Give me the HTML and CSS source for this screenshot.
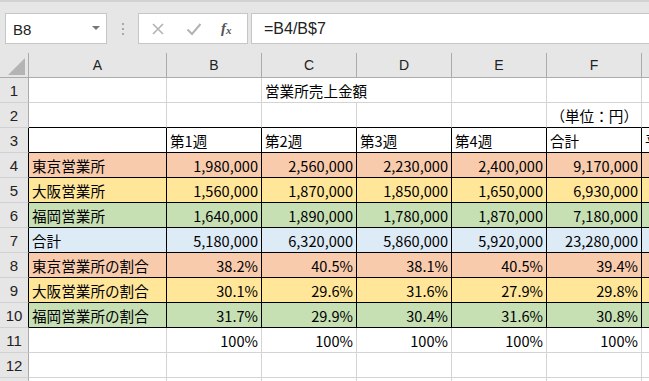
FILE: index.html
```html
<!DOCTYPE html>
<html lang="ja">
<head>
<meta charset="utf-8">
<link rel="stylesheet" href="styles.css">
</head>
<body>
<div class="toolbar">
  <div class="namebox"><span>B8</span><span class="caret"></span></div>
  <div class="dots"><i></i><i></i><i></i></div>
  <div class="fbtns">
    <svg class="ico" width="14" height="14" viewBox="0 0 14 14"><path d="M2 2 L12 12 M12 2 L2 12" stroke="#b3b3b3" stroke-width="1.6" fill="none"/></svg>
    <svg class="ico" width="16" height="14" viewBox="0 0 16 14"><path d="M1.5 7.5 L6 12 L14.5 2" stroke="#b3b3b3" stroke-width="2" fill="none"/></svg>
    <span class="fx">f<sub>x</sub></span>
  </div>
  <div class="formula">=B4/B$7</div>
</div>
<div class="sheet">
  <div class="corner"><span class="tri"></span></div>
  <div class="h">A</div><div class="h">B</div><div class="h">C</div><div class="h">D</div><div class="h">E</div><div class="h">F</div><div class="h"></div>

  <div class="r">1</div><div class="c"></div><div class="c"></div><div class="c span2">営業所売上金額</div><div class="c"></div><div class="c"></div><div class="c"></div>

  <div class="r">2</div><div class="c bt"></div><div class="c bt"></div><div class="c bt"></div><div class="c bt"></div><div class="c bt"></div><div class="c bt n">（単位：円）</div><div class="c bt"></div>

  <div class="r rb">3</div><div class="c b"></div><div class="c b">第1週</div><div class="c b">第2週</div><div class="c b">第3週</div><div class="c b">第4週</div><div class="c b">合計</div><div class="c b">平均</div>

  <div class="r rb">4</div><div class="c b or">東京営業所</div><div class="c b or n">1,980,000</div><div class="c b or n">2,560,000</div><div class="c b or n">2,230,000</div><div class="c b or n">2,400,000</div><div class="c b or n">9,170,000</div><div class="c b or n"></div>

  <div class="r rb">5</div><div class="c b ye">大阪営業所</div><div class="c b ye n">1,560,000</div><div class="c b ye n">1,870,000</div><div class="c b ye n">1,850,000</div><div class="c b ye n">1,650,000</div><div class="c b ye n">6,930,000</div><div class="c b ye n"></div>

  <div class="r rb">6</div><div class="c b gr">福岡営業所</div><div class="c b gr n">1,640,000</div><div class="c b gr n">1,890,000</div><div class="c b gr n">1,780,000</div><div class="c b gr n">1,870,000</div><div class="c b gr n">7,180,000</div><div class="c b gr n"></div>

  <div class="r rb">7</div><div class="c b bl">合計</div><div class="c b bl n">5,180,000</div><div class="c b bl n">6,320,000</div><div class="c b bl n">5,860,000</div><div class="c b bl n">5,920,000</div><div class="c b bl n">23,280,000</div><div class="c b bl n"></div>

  <div class="r rb">8</div><div class="c b or">東京営業所の割合</div><div class="c b or n">38.2%</div><div class="c b or n">40.5%</div><div class="c b or n">38.1%</div><div class="c b or n">40.5%</div><div class="c b or n">39.4%</div><div class="c b or n"></div>

  <div class="r rb">9</div><div class="c b ye">大阪営業所の割合</div><div class="c b ye n">30.1%</div><div class="c b ye n">29.6%</div><div class="c b ye n">31.6%</div><div class="c b ye n">27.9%</div><div class="c b ye n">29.8%</div><div class="c b ye n"></div>

  <div class="r rb">10</div><div class="c b gr">福岡営業所の割合</div><div class="c b gr n">31.7%</div><div class="c b gr n">29.9%</div><div class="c b gr n">30.4%</div><div class="c b gr n">31.6%</div><div class="c b gr n">30.8%</div><div class="c b gr n"></div>

  <div class="r">11</div><div class="c"></div><div class="c n">100%</div><div class="c n">100%</div><div class="c n">100%</div><div class="c n">100%</div><div class="c n">100%</div><div class="c"></div>

  <div class="r">12</div><div class="c"></div><div class="c"></div><div class="c"></div><div class="c"></div><div class="c"></div><div class="c"></div><div class="c"></div>

  <div class="r"></div><div class="c"></div><div class="c"></div><div class="c"></div><div class="c"></div><div class="c"></div><div class="c"></div><div class="c"></div>
</div>
</body>
</html>
```

FILE: styles.css
```css
html, body {
  margin: 0;
  padding: 0;
  overflow: hidden;
  background: #ffffff;
  width: 649px;
  height: 381px;
}
body {
  font-family: "Liberation Sans", Arial, sans-serif;
  color: #000;
}
.toolbar {
  height: 53px;
  box-sizing: border-box;
  background: #e6e6e6;
  border-top: 2px solid #d2d2d2;
  display: flex;
  align-items: flex-start;
  padding-top: 11px;
  padding-left: 5px;
}
.namebox {
  width: 102px;
  height: 31px;
  box-sizing: border-box;
  background: #fff;
  border: 1px solid #c6c6c6;
  display: flex;
  align-items: center;
  justify-content: space-between;
  padding: 1px 6px 0 7px;
  font-size: 15px;
  color: #222;
}
.caret {
  width: 0;
  height: 0;
  border-left: 4px solid transparent;
  border-right: 4px solid transparent;
  border-top: 4px solid #777;
  margin-top: -2px;
}
.dots {
  width: 31px;
  height: 31px;
  display: flex;
  flex-direction: column;
  align-items: center;
  justify-content: center;
  gap: 3px;
}
.dots i {
  width: 2px;
  height: 2px;
  background: #a8a8a8;
  display: block;
}
.fbtns {
  width: 110px;
  height: 31px;
  box-sizing: border-box;
  background: #fff;
  border: 1px solid #c6c6c6;
  display: flex;
  align-items: center;
  padding-left: 12px;
}
.fbtns .ico:nth-child(1) { margin-right: 21px; }
.fbtns .ico:nth-child(2) { margin-right: 19px; }
.fx {
  font-family: "Liberation Serif", serif;
  font-style: italic;
  font-weight: bold;
  font-size: 15px;
  color: #555;
  line-height: 1;
}
.fx sub {
  font-size: 11px;
  vertical-align: -1px;
}
.formula {
  margin-left: 3px;
  flex: 1;
  height: 31px;
  box-sizing: border-box;
  background: #fff;
  border: 1px solid #c6c6c6;
  border-right: none;
  padding: 1px 0 0 12px;
  line-height: 28px;
  font-size: 16px;
  color: #222;
}
.sheet {
  display: grid;
  grid-template-columns: 29px 138px 95px 95px 95px 95px 95px 95px;
  grid-auto-rows: 25px;
}
.corner {
  background: #e6e6e6;
  border-right: 1px solid #ababab;
  border-bottom: 1px solid #ababab;
  position: relative;
}
.tri {
  position: absolute;
  left: 8px;
  top: 5px;
  width: 0;
  height: 0;
  border-left: 17px solid transparent;
  border-bottom: 17px solid #b4b4b4;
}
.h {
  background: #e6e6e6;
  border-right: 1px solid #ababab;
  border-bottom: 1px solid #ababab;
  text-align: center;
  font-size: 14px;
  line-height: 25px;
  color: #222;
}
.r {
  background: #e6e6e6;
  border-right: 1px solid #ababab;
  border-bottom: 1px solid #d0d0d0;
  text-align: center;
  font-size: 15px;
  line-height: 25px;
  color: #222;
}
.r.rb { border-right-color: #000; }
.c {
  box-sizing: border-box;
  border-right: 1px solid #d4d4d4;
  border-bottom: 1px solid #d4d4d4;
  padding: 1px 3px 0 3px;
  font-family: "Noto Sans CJK JP", sans-serif;
  font-size: 14.6px;
  line-height: 23px;
  white-space: nowrap;
  overflow: hidden;
}
.c.span2 { grid-column: span 2; }
.c.n { text-align: right; }
.c.bt { border-bottom-color: #000; }
.c.b { border-right-color: #000; border-bottom-color: #000; }
.or { background: #f8cbad; }
.ye { background: #ffe699; }
.gr { background: #c6e0b4; }
.bl { background: #ddebf7; }
```
